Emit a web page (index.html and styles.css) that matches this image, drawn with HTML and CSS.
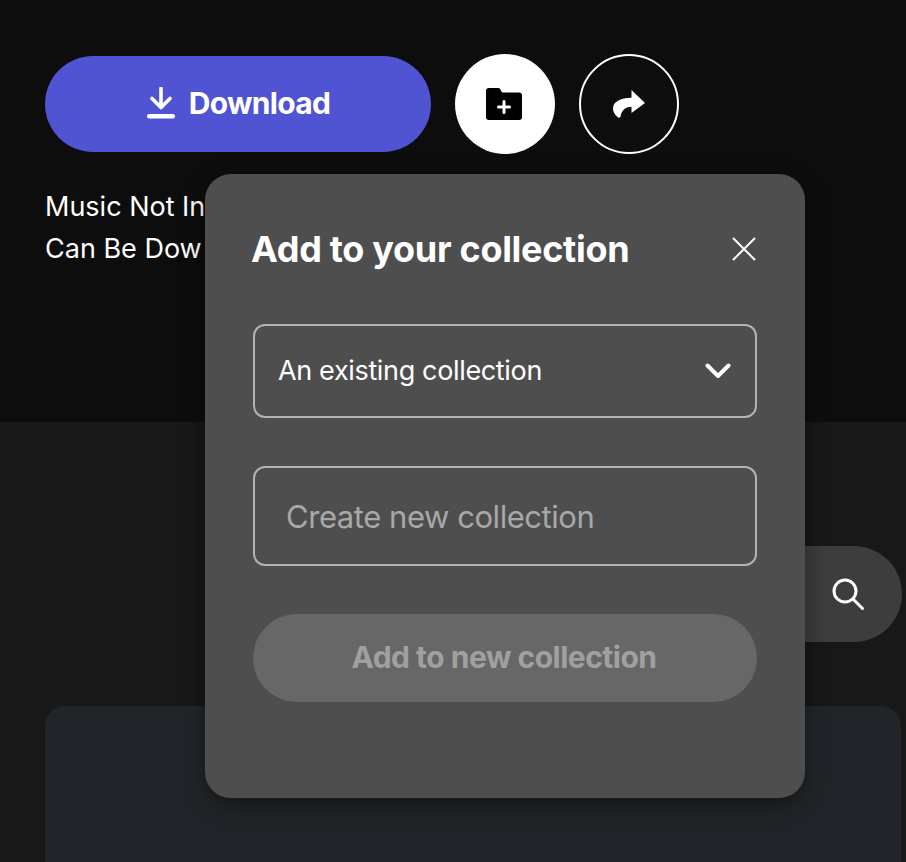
FILE: index.html
```html
<!DOCTYPE html>
<html lang="en">
<head>
    <meta charset="UTF-8">
    <meta name="viewport" content="width=device-width, initial-scale=1.0">
    <title>Add to your collection</title>
    <link rel="stylesheet" href="styles.css">
</head>
<body>
    <div class="hero">
        <div class="actions">
            <div class="download">
                <svg class="download-icon" viewBox="0 0 30 32" width="30" height="32">
                    <path d="M15 1.500v18M6 11.500 15 20.500l9-9" fill="none" stroke="#fff" stroke-width="3.600" stroke-linecap="round" stroke-linejoin="round"/>
                    <rect x="1" y="27" width="28" height="4.500" rx="2.250" fill="#fff"/>
                </svg>
                <span>Download</span>
            </div>
            <div class="circle circle-white">
                <svg class="folder-icon" viewBox="0 0 36 32" width="36" height="32">
                    <path d="M3 0h9.500a2 2 0 0 1 1.500.7L16 4.500h17a3 3 0 0 1 3 3V29a3 3 0 0 1-3 3H3a3 3 0 0 1-3-3V3a3 3 0 0 1 3-3z" fill="#000"/>
                    <path d="M18 13.500v11M12.500 19h11" stroke="#fff" stroke-width="3" stroke-linecap="round"/>
                </svg>
            </div>
            <div class="circle circle-outline">
                <svg viewBox="0 0 32 28" width="32" height="28">
                    <path d="M18.500 0 32 13 18.500 23V16.800C13 16.800 9 19.500 7.500 26.500 7 28 5.500 28 4.500 27 1 24 0 21 0 18.500 0 12 7 7.800 18.500 7.800z" fill="#fff"/>
                </svg>
            </div>
        </div>
        <div class="note">
            <p>Music Not In</p>
            <p>Can Be Dow</p>
        </div>
    </div>

    <div class="lower">
        <div class="search">
            <svg viewBox="0 0 32 32" width="32" height="32">
                <circle cx="13" cy="13" r="11" fill="none" stroke="#fff" stroke-width="3"/>
                <path d="M21 21 30.500 30.500" stroke="#fff" stroke-width="3" stroke-linecap="round"/>
            </svg>
        </div>
        <div class="card"></div>
    </div>

    <div class="modal">
        <div class="modal-head">
            <h2>Add to your collection</h2>
            <svg viewBox="0 0 24 24" width="24" height="24">
                <path d="M1 1 23 23M23 1 1 23" stroke="#fff" stroke-width="2" fill="none"/>
            </svg>
        </div>
        <div class="picker">
            <span>An existing collection</span>
            <svg viewBox="0 0 26 16" width="26" height="16">
                <path d="M2.500 2.500 13 13 23.500 2.500" fill="none" stroke="#fff" stroke-width="4" stroke-linecap="round" stroke-linejoin="round"/>
            </svg>
        </div>
        <input class="new-name" type="text" placeholder="Create new collection">
        <div class="add-btn">Add to new collection</div>
    </div>
</body>
</html>
```

FILE: styles.css
```css
* {
    box-sizing: border-box;
}
html, body {
    height: 862px;
}
body {
    margin: 0;
    position: relative;
    overflow: hidden;
    background-color: #181818;
    color: #fff;
    font-family: Inter, "Liberation Sans", sans-serif;
}

/* top part */
.hero {
    height: 422px;
    padding: 54px 45px 0;
    background-color: #0d0d0d;
}
.actions {
    display: flex;
    align-items: center;
    gap: 24px;
}
.download {
    display: flex;
    align-items: center;
    justify-content: center;
    gap: 13px;
    width: 386px;
    height: 96px;
    padding-bottom: 2px;
    border-radius: 48px;
    background-color: #5053d2;
    font-size: 30px;
    font-weight: 700;
    letter-spacing: -0.7px;
}
.circle {
    display: flex;
    align-items: center;
    justify-content: center;
    width: 100px;
    height: 100px;
    border-radius: 50%;
}
.circle-white {
    background-color: #fff;
}
.folder-icon {
    margin-left: -2px;
}
.circle-outline {
    border: 2px solid #fff;
}
.note {
    margin-top: 32px;
    font-size: 27px;
    line-height: 42px;
}
.note p {
    margin: 0;
}

/* bottom part */
.lower {
    padding: 124px 4px 0 45px;
}
.search {
    display: flex;
    align-items: center;
    justify-content: flex-end;
    height: 96px;
    margin-left: 300px;
    padding-right: 38px;
    border-radius: 48px;
    background-color: #3d3d3d;
}
.card {
    width: 856px;
    height: 156px;
    margin-top: 64px;
    border-radius: 20px 20px 0 0;
    background-color: #212529;
}

/* popup */
.modal {
    position: absolute;
    left: 205px;
    top: 174px;
    width: 600px;
    height: 624px;
    padding: 48px 48px 0;
    border-radius: 26px;
    background-color: #4e4e4e;
    box-shadow: 0 8px 24px rgba(0, 0, 0, 0.4);
}
.modal-head {
    display: flex;
    align-items: center;
    justify-content: space-between;
    height: 54px;
    padding-right: 1px;
}
.modal-head h2 {
    margin: 0 0 0 -2px;
    font-size: 36px;
    font-weight: 700;
    letter-spacing: -0.3px;
}
.picker {
    display: flex;
    align-items: center;
    justify-content: space-between;
    height: 94px;
    margin-top: 48px;
    padding: 0 24px;
    border: 2px solid #b3b3b3;
    border-radius: 12px;
    font-size: 27px;
    letter-spacing: -0.35px;
}
.picker span {
    margin: -2px 0 0 -1px;
}
.new-name {
    display: block;
    width: 100%;
    height: 100px;
    margin-top: 48px;
    padding: 0 31px;
    border: 2px solid #b3b3b3;
    border-radius: 12px;
    background: none;
    color: #fff;
    font-family: inherit;
    font-size: 31px;
    letter-spacing: -0.45px;
}
.new-name::placeholder {
    color: #a8a8a8;
    opacity: 1;
}
.add-btn {
    height: 88px;
    margin-top: 48px;
    padding-right: 2px;
    border-radius: 44px;
    background-color: #676767;
    color: #a0a0a0;
    font-size: 30px;
    font-weight: 700;
    line-height: 86px;
    text-align: center;
    letter-spacing: -0.5px;
}
```
